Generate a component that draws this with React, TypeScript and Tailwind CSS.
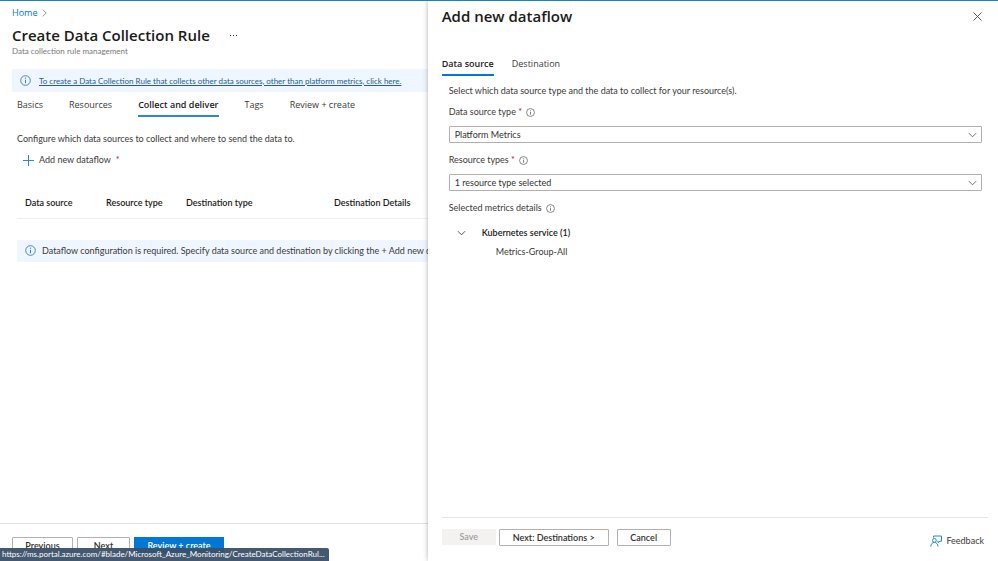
import type { ReactNode } from "react";

const steps = ["Basics", "Resources", "Collect and deliver", "Tags", "Review + create"];

const InfoIcon = ({ className }: { className?: string }) => (
  <svg viewBox="0 0 16 16" fill="none" stroke="currentColor" className={className}>
    <circle cx="8" cy="8" r="7" strokeWidth="1.3" />
    <path d="M8 7v5" strokeWidth="1.4" />
    <circle cx="8" cy="4.7" r="0.9" fill="currentColor" stroke="none" />
  </svg>
);

const ChevronDown = ({ className }: { className?: string }) => (
  <svg viewBox="0 0 10 6" fill="none" stroke="currentColor" strokeWidth="1" className={className}>
    <path d="M1 1l4 4 4-4" />
  </svg>
);

const FeedbackIcon = () => (
  <svg viewBox="0 0 12 12" fill="none" stroke="#2b88d8" strokeWidth="1" className="w-3 h-3">
    <path d="M3.5 2.6V1h8v5.2H10L8.2 7.8V6.2H7.4" />
    <circle cx="4.4" cy="5.4" r="1.9" />
    <path d="M0.8 11.6c0-2.4 1.5-4.2 3.6-4.2s3.6 1.8 3.6 4.2" />
  </svg>
);

const Field = ({ id, label, value }: { id: string; label: string; value: string }) => (
  <div className="flex flex-col gap-2">
    <div className="flex items-center gap-1 h-3">
      <label htmlFor={id}>
        {label} <span className="text-[#a4262c]">*</span>
      </label>
      <InfoIcon className="w-[9px] h-[9px] text-[#605e5c]" />
    </div>
    <div className="relative">
      <select
        id={id}
        className="block w-full h-[17px] appearance-none rounded-[1px] border border-[#b3b0ad] bg-white pl-[5px] pr-6 leading-[14px] text-[#323130]"
      >
        <option>{value}</option>
      </select>
      <ChevronDown className="pointer-events-none absolute right-[5px] top-[6px] w-[9px] h-[6px] text-[#605e5c]" />
    </div>
  </div>
);

const OutlineButton = ({ className, children }: { className: string; children: ReactNode }) => (
  <button
    type="button"
    className={`h-[17px] rounded-[1px] border border-[#b3b0ad] bg-white font-semibold text-[#323130] ${className}`}
  >
    {children}
  </button>
);

const RulePage = () => (
  <section className="flex min-w-0 flex-col overflow-hidden whitespace-nowrap">
    <header className="flex flex-col pl-3 pt-[5px]">
      <nav className="flex items-center gap-[5px] h-[14px]">
        <a href="#home" className="font-['Open_Sans',sans-serif] text-[#0078d4]">
          Home
        </a>
        <svg viewBox="0 0 5 8" fill="none" stroke="#797775" strokeWidth="0.8" className="w-[5px] h-2">
          <path d="M0.8 0.6L4.2 4 0.8 7.4" />
        </svg>
      </nav>
      <div className="flex items-center gap-5 h-[26px] mt-[2px]">
        <h1 className="font-['Open_Sans',sans-serif] text-[15px] font-semibold text-[#1b1a19]">
          Create Data Collection Rule
        </h1>
        <button type="button" aria-label="More" className="flex gap-[2px]">
          <span className="w-px h-px bg-[#323130]" />
          <span className="w-px h-px bg-[#323130]" />
          <span className="w-px h-px bg-[#323130]" />
        </button>
      </div>
      <p className="h-[10px] text-[8px] leading-[10px] text-[#797775] -mt-[2px]">Data collection rule management</p>
    </header>

    <div className="ml-3 mt-[13px] flex shrink-0 items-center gap-2 h-[23px] bg-[#f0f6ff] pl-2">
      <InfoIcon className="w-[11px] h-[11px] text-[#2b7de0]" />
      <a href="#other" className="text-[8px] text-[#215f92] underline">
        To create a Data Collection Rule that collects other data sources, other than platform metrics, click here.
      </a>
    </div>

    <nav className="flex items-start pl-[17px] pt-[5px] gap-[26px] font-['Open_Sans',sans-serif]">
      {steps.map((step) => (
        <a
          key={step}
          href="#step"
          className={
            step === "Collect and deliver"
              ? "h-5 leading-4 border-b-2 border-[#2b88d8] font-semibold text-[#1b1a19]"
              : "h-5 leading-4"
          }
        >
          {step}
        </a>
      ))}
    </nav>

    <div className="flex flex-1 flex-col pl-[17px] pt-[15px]">
      <p className="leading-[14px]">Configure which data sources to collect and where to send the data to.</p>
      <button type="button" className="mt-[7px] flex items-center gap-[5px] h-[14px] pl-[6px]">
        <svg viewBox="0 0 11 11" stroke="#2b88d8" strokeWidth="1" className="w-[11px] h-[11px]">
          <path d="M5.5 0v11M0 5.5h11" />
        </svg>
        Add new dataflow <span className="text-[#a4262c]">*</span>
      </button>

      <table className="mt-[21px] w-full min-w-[500px] table-fixed text-left text-[#1b1a19]">
        <thead>
          <tr className="h-[30px] border-b border-[#f0efee]">
            <th className="w-[81px] pl-2 font-semibold">Data source</th>
            <th className="w-[80px] pl-2 font-semibold">Resource type</th>
            <th className="w-[148px] pl-2 font-semibold">Destination type</th>
            <th className="pl-2 font-semibold">Destination Details</th>
          </tr>
        </thead>
      </table>

      <div className="mt-[21px] flex items-center gap-[6px] h-[22px] bg-[#f0f6ff] pl-2">
        <InfoIcon className="w-[11px] h-[11px] shrink-0 text-[#2b7de0]" />
        <p>Dataflow configuration is required. Specify data source and destination by clicking the + Add new dataflow</p>
      </div>
    </div>

    <footer className="flex gap-1 border-t border-[#e1dfdd] pl-3 pt-[13px] pb-[7px]">
      <OutlineButton className="w-[61px]">Previous</OutlineButton>
      <OutlineButton className="w-[53px]">Next</OutlineButton>
      <button type="button" className="w-[90px] h-[17px] bg-[#0078d4] font-semibold text-white">
        Review + create
      </button>
    </footer>
  </section>
);

const DataflowPanel = () => (
  <aside className="z-10 flex min-w-0 flex-col bg-white pl-[14px] shadow-[0_0_5px_rgba(0,0,0,0.3)]">
    <header className="flex items-center justify-between pr-4 h-[31px]">
      <h2 className="font-['Open_Sans',sans-serif] text-[15px] font-semibold text-[#1b1a19]">Add new dataflow</h2>
      <button type="button" aria-label="Close">
        <svg viewBox="0 0 9 9" stroke="#484644" strokeWidth="0.9" className="w-[9px] h-[9px]">
          <path d="M0.5 0.5l8 8M8.5 0.5l-8 8" />
        </svg>
      </button>
    </header>

    <nav className="mt-6 flex gap-[18px] font-['Open_Sans',sans-serif]">
      <a href="#source" className="h-5 leading-4 border-b-2 border-[#0078d4] font-semibold text-[#1b1a19]">
        Data source
      </a>
      <a href="#destination" className="h-5 leading-4">
        Destination
      </a>
    </nav>

    <div className="flex flex-1 flex-col gap-2 pl-[7px] pr-4 pt-2">
      <p className="leading-[14px]">Select which data source type and the data to collect for your resource(s).</p>
      <div className="flex flex-col gap-[11px]">
        <Field id="source-type" label="Data source type" value="Platform Metrics" />
        <Field id="resource-types" label="Resource types" value="1 resource type selected" />
        <div>
          <div className="flex items-center gap-1 h-3">
            Selected metrics details
            <InfoIcon className="w-[9px] h-[9px] text-[#605e5c]" />
          </div>
          <button type="button" className="mt-3 flex items-center gap-4 h-[14px] pl-2 font-semibold text-[#1b1a19]">
            <ChevronDown className="w-[9px] h-[6px] text-[#484644]" />
            Kubernetes service (1)
          </button>
          <p className="mt-[5px] pl-[47px] leading-[14px]">Metrics-Group-All</p>
        </div>
      </div>
    </div>

    <footer className="mr-[10px] flex items-start border-t border-[#e8e6e4] pt-[11px] h-11">
      <button type="button" disabled className="w-[54px] h-4 bg-[#f3f2f1] font-semibold text-[#a19f9d]">
        Save
      </button>
      <OutlineButton className="ml-[3px] w-[110px]">Next: Destinations &gt;</OutlineButton>
      <OutlineButton className="ml-2 w-[54px]">Cancel</OutlineButton>
      <button type="button" className="ml-auto mr-1 mt-[6px] flex items-center gap-1">
        <FeedbackIcon />
        <span className="leading-3">Feedback</span>
      </button>
    </footer>
  </aside>
);

const App = () => {
  return (
    <main className="relative grid h-screen grid-cols-[3fr_4fr] overflow-hidden border-t border-[#1a80d6] bg-white font-[Lato,sans-serif] text-[9px] text-[#3b3a39]">
      <RulePage />
      <DataflowPanel />
      <div className="absolute bottom-0 left-0 z-20 h-[13px] rounded-tr-[2px] bg-[#3a5068]/95 px-[2px] pr-1 text-[8px] leading-[13px] text-white">
        https://ms.portal.azure.com/#blade/Microsoft_Azure_Monitoring/CreateDataCollectionRul...
      </div>
    </main>
  );
};

export default App;
